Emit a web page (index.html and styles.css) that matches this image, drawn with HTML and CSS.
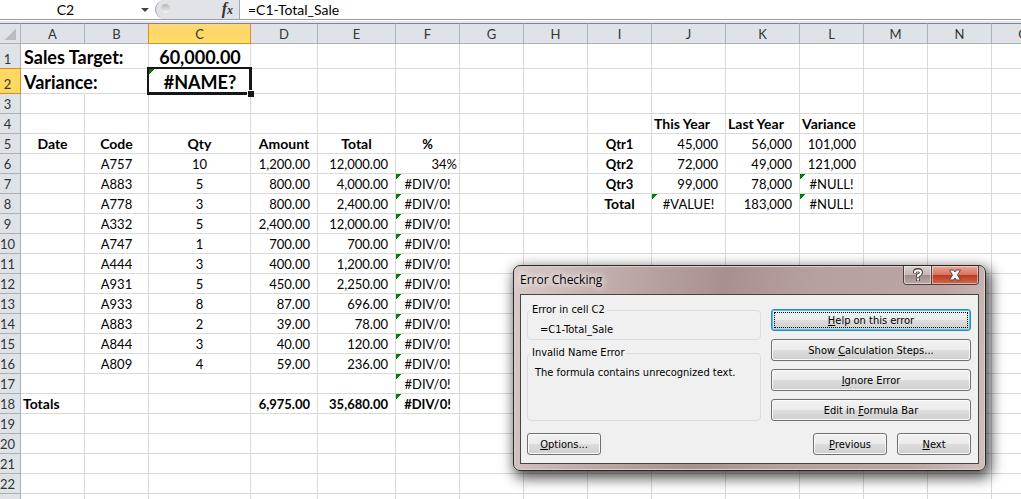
FILE: index.html
```
<!DOCTYPE html>
<html lang="en">
<head>
    <meta charset="UTF-8">
    <meta name="viewport" content="width=device-width, initial-scale=1.0">
    <title>Error Checking</title>
    <link rel="stylesheet" href="styles.css">
</head>
<body>
    <div class="app">
        <div class="formulaBar">
            <div class="nameBox">
                <input type="text" value="C2" aria-label="Name box">
                <button type="button" class="arrow" aria-label="Names"></button>
            </div>
            <div class="fxArea">
                <span class="knob"></span>
                <button type="button" class="fx" aria-label="Insert function">f<small>x</small></button>
            </div>
            <input type="text" class="formula" value="=C1-Total_Sale" aria-label="Formula">
        </div>
        <div class="sheet">
            <table id="grid"></table>
        </div>
    </div>

    <div class="dialog" role="dialog" aria-labelledby="dialogTitle">
        <div class="titleBar">
            <span class="title" id="dialogTitle">Error Checking</span>
            <div class="winButtons">
                <button type="button" class="help" aria-label="Help">
                    <svg width="12" height="14" viewBox="0 0 12 14">
                        <path d="M3 5.500V4Q3 2 6 2T9 4.500Q9 6 6 7.500V9.500M6 10.500V13" fill="none" stroke="#4e4546" stroke-width="4"/>
                        <path d="M3 5V4Q3 2.500 6 2.500T9 4.500Q9 6 6 7.500V9M6 10.500V12.500" fill="none" stroke="#fff" stroke-width="2"/>
                    </svg>
                </button>
                <button type="button" class="close" aria-label="Close">
                    <svg width="14" height="12" viewBox="0 0 14 12">
                        <path d="M1.500 1H5.500L7 3L8.500 1H12.500L9.500 6L12.500 11H8.500L7 9L5.500 11H1.500L4.500 6Z" fill="#f4f4f4" stroke="#5b4a52" stroke-width="1"/>
                    </svg>
                </button>
            </div>
        </div>
        <div class="client">
            <div class="main">
                <div class="groups">
                    <fieldset class="cellGroup">
                        <legend>Error in cell C2</legend>
                        <p>=C1-Total_Sale</p>
                    </fieldset>
                    <fieldset class="errorGroup">
                        <legend>Invalid Name Error</legend>
                        <p>The formula contains unrecognized text.</p>
                    </fieldset>
                </div>
                <div class="actions">
                    <button type="button" class="btn focused"><u>H</u>elp on this error</button>
                    <button type="button" class="btn">Show <u>C</u>alculation Steps...</button>
                    <button type="button" class="btn"><u>I</u>gnore Error</button>
                    <button type="button" class="btn">Edit in <u>F</u>ormula Bar</button>
                </div>
            </div>
            <div class="footer">
                <button type="button" class="btn options"><u>O</u>ptions...</button>
                <button type="button" class="btn"><u>P</u>revious</button>
                <button type="button" class="btn"><u>N</u>ext</button>
            </div>
        </div>
    </div>
    <script src="script.js"></script>
</body>
</html>
```
FILE: styles.css
```
*{
    box-sizing: border-box;
}

body{
    margin: 0;
    background: #fff;
    color: #000;
    font-family: Lato, "Liberation Sans", sans-serif;
    font-size: 13px;
}

button, input{
    font: inherit;
    color: inherit;
    margin: 0;
    padding: 0;
}

.app{
    display: flex;
    flex-direction: column;
    height: 100vh;
    overflow: hidden;
}

/* formula bar */
.formulaBar{
    display: flex;
    flex: none;
    height: 20px;
    border-bottom: 1px solid #9a9ba3;
    font-size: 14px;
}

.formulaBar input{
    border: none;
    outline: none;
    background: none;
    min-width: 0;
}

.nameBox{
    display: flex;
    width: 155px;
}

.nameBox input{
    flex: 1;
    padding-right: 4px;
    text-align: center;
}

.arrow{
    width: 20px;
    border: none;
    background: none;
    display: flex;
    align-items: center;
    justify-content: center;
}

.arrow::before{
    content: "";
    border: 4px solid transparent;
    border-top-color: #444;
    border-bottom: none;
}

.fxArea{
    display: flex;
    justify-content: space-between;
    width: 85px;
    padding: 0 6px 0 5px;
    background: #e0e3e8;
    border: 1px solid #a4a7ac;
    border-width: 0 1px;
    border-radius: 12px 0 0 12px;
}

.knob{
    width: 9px;
    height: 9px;
    margin-top: 4px;
    border-radius: 50%;
    background: linear-gradient(#b4b6ba, #f4f5f6);
}

.fx{
    border: none;
    background: none;
    font: italic bold 16px/18px "Liberation Serif", serif;
    color: #333;
}

.fx small{
    font-size: 12px;
}

.formula{
    flex: 1;
    padding-left: 8px;
}

/* grid */
.sheet{
    flex: 1;
    overflow: hidden;
    padding-top: 3px;
    background: linear-gradient(#fff 1px, #e4e4f2 1px, #e4e4f2 3px, #fff 3px);
}

table{
    table-layout: fixed;
    border-collapse: separate;
    border-spacing: 0;
    width: 1px;
}

th, td{
    height: 20px;
    padding: 0 2px;
    border: 1px solid #d9d9d9;
    border-width: 0 1px 1px 0;
    line-height: 18px;
    white-space: nowrap;
    vertical-align: bottom;
    text-align: left;
}

thead th{
    height: 21px;
    border-color: #aab1b8;
    border-top: 1px solid #80848c;
    background: #dfe3e8;
    color: #333;
    font-weight: normal;
    text-align: center;
}

thead .active{
    border-color: #80848c #d98d29 #d98d29;
    background: linear-gradient(#fbd978, #ffd764 50%, #ffdf6c);
}

thead .beforeActive{
    border-right-color: #d98d29;
}

tbody th{
    padding: 0 5px 0 0;
    border-color: #aab1b8;
    background: #dfe3e8;
    color: #333;
    font-weight: normal;
    text-align: center;
}

tbody .active{
    border-color: #d98d29;
    background: #ffd85f;
}

tbody .aboveActive{
    border-bottom-color: #d98d29;
}

.corner::before{
    content: "";
    display: block;
    width: 11px;
    height: 11px;
    margin: 0 0 3px 3px;
    background: linear-gradient(135deg, transparent 50%, #b9bcc2 50%);
}

.tall th, .tall td{
    height: 25px;
}

.tall td{
    padding-left: 3px;
    font-size: 18px;
    line-height: 22px;
}

.overflowing{
    border-right-color: transparent;
    overflow: visible;
}

.label{
    font-size: 14px;
}

.bold{
    font-weight: bold;
}

.center{
    text-align: center;
}

.num{
    padding-right: 7px;
    text-align: right;
}

.percent{
    padding-right: 2px;
    text-align: right;
}

.error{
    background: linear-gradient(135deg, #008000 4px, transparent 4px) no-repeat;
}

.selected{
    position: relative;
}

.selected::before{
    content: "";
    position: absolute;
    inset: -2px;
    border: 3px solid #15151c;
    border-width: 2px 3px 3px 2px;
}

.selected::after{
    content: "";
    position: absolute;
    right: -4px;
    bottom: -4px;
    width: 6px;
    height: 6px;
    border: 1px solid #fff;
    border-width: 1px 0 0 1px;
    background: #15151c;
}

/* dialog */
.dialog{
    position: absolute;
    left: 513px;
    top: 265px;
    width: 473px;
    padding: 0 6px 6px;
    border: 1px solid #2c2526;
    border-radius: 7px;
    background: linear-gradient(100deg, #d9cbc9, #c0acaa 20%, #a8908e 42%, #b7a19e 60%, #b9a5a2 85%, #cfc0be);
    box-shadow: inset 0 0 0 1px #dccfcd, 3px 5px 14px 2px rgba(0, 0, 0, 0.7);
    font-family: "DejaVu Sans Condensed", "DejaVu Sans", sans-serif;
    font-size: 11px;
}

.titleBar{
    display: flex;
    justify-content: space-between;
    height: 28px;
}

.title{
    font: 12px/28px "Open Sans", sans-serif;
    text-shadow: 0 0 6px #fff, 0 0 8px #fff;
}

.winButtons{
    display: flex;
    height: 19px;
    border: 1px solid #4e4042;
    border-top: none;
    border-radius: 0 0 4px 4px;
    overflow: hidden;
}

.winButtons button{
    display: flex;
    align-items: center;
    justify-content: center;
    border: none;
    box-shadow: inset 0 0 0 1px rgba(255, 255, 255, 0.45);
}

.help{
    width: 27px;
    background: linear-gradient(#ddd2d0, #c5b5b3 50%, #a18c8a 50%, #bba9a7);
}

.winButtons .close{
    width: 47px;
    border-left: 1px solid #4e4042;
    background: linear-gradient(#e9a898, #d9705c 50%, #b93a20 50%, #d06a4c);
}

.client{
    display: flex;
    flex-direction: column;
    gap: 12px;
    padding: 8px 7px 8px 6px;
    border: 1px solid #4a4142;
    background: #f0f0f0;
}

.main{
    display: grid;
    grid-template-columns: 1fr 200px;
    gap: 10px;
}

.groups{
    display: flex;
    flex-direction: column;
    gap: 6px;
}

fieldset{
    margin: 0;
    padding: 0 6px;
    border: 1px solid #d5dfe5;
    border-radius: 4px;
    min-width: 0;
}

legend{
    margin-left: -4px;
    padding: 0 2px;
    line-height: 14px;
}

fieldset p{
    margin: 6px 0 0;
    line-height: 14px;
}

.cellGroup{
    height: 37px;
}

.cellGroup p{
    padding-left: 6px;
}

.errorGroup{
    height: 75px;
}

.errorGroup p{
    padding-left: 1px;
}

.actions{
    display: flex;
    flex-direction: column;
    gap: 8px;
    padding-top: 6px;
}

.btn{
    width: 74px;
    height: 22px;
    border: 1px solid #707070;
    border-radius: 3px;
    background: linear-gradient(#f2f2f2, #ebebeb 50%, #dddddd 50%, #cfcfcf);
    box-shadow: inset 0 0 0 1px #fafafa;
}

.actions .btn{
    width: 100%;
}

.focused{
    border-color: #3c7fb1;
    box-shadow: inset 0 0 0 1px #48c8f5;
    outline: 1px dotted #000;
    outline-offset: -4px;
}

.footer{
    display: flex;
    gap: 10px;
}

.options{
    margin-right: auto;
}
```
FILE: script.js
```
var columns = "ABCDEFGHIJKLMNOPQRST".split("");
var widths = { C: 102, D: 67, E: 78, J: 74, K: 74 };
var rowCount = 40;

// cell -> [text, classes]
var cells = {
    A1: ["Sales Target:", "bold overflowing"],
    C1: ["60,000.00", "bold center"],
    A2: ["Variance:", "bold overflowing"],
    C2: ["#NAME?", "bold center error selected"],
    A5: ["Date", "bold label center"],
    B5: ["Code", "bold label center"],
    C5: ["Qty", "bold label center"],
    D5: ["Amount", "bold label center"],
    E5: ["Total", "bold label center"],
    F5: ["%", "bold center"],
    F6: ["34%", "percent"],
    F17: ["#DIV/0!", "center error"],
    A18: ["Totals", "bold label"],
    D18: ["6,975.00", "bold num"],
    E18: ["35,680.00", "bold num"],
    F18: ["#DIV/0!", "bold center error"],
    J4: ["This Year", "bold label"],
    K4: ["Last Year", "bold label"],
    L4: ["Variance", "bold label"],
    L7: ["#NULL!", "center error"],
    J8: ["#VALUE!", "center error"],
    K8: ["183,000", "num"],
    L8: ["#NULL!", "center error"],
    I8: ["Total", "bold label center"]
};

var orders = [
    ["A757", "10", "1,200.00", "12,000.00"],
    ["A883", "5", "800.00", "4,000.00"],
    ["A778", "3", "800.00", "2,400.00"],
    ["A332", "5", "2,400.00", "12,000.00"],
    ["A747", "1", "700.00", "700.00"],
    ["A444", "3", "400.00", "1,200.00"],
    ["A931", "5", "450.00", "2,250.00"],
    ["A933", "8", "87.00", "696.00"],
    ["A883", "2", "39.00", "78.00"],
    ["A844", "3", "40.00", "120.00"],
    ["A809", "4", "59.00", "236.00"]
];
orders.forEach(function(order, i){
    var row = i + 6;
    cells["B" + row] = [order[0], "center"];
    cells["C" + row] = [order[1], "center"];
    cells["D" + row] = [order[2], "num"];
    cells["E" + row] = [order[3], "num"];
    if(i > 0){
        cells["F" + row] = ["#DIV/0!", "center error"];
    }
});

var quarters = [
    ["Qtr1", "45,000", "56,000", "101,000"],
    ["Qtr2", "72,000", "49,000", "121,000"],
    ["Qtr3", "99,000", "78,000"]
];
quarters.forEach(function(quarter, i){
    var row = i + 5;
    cells["I" + row] = [quarter[0], "bold center"];
    cells["J" + row] = [quarter[1], "num"];
    cells["K" + row] = [quarter[2], "num"];
    if(quarter[3]){
        cells["L" + row] = [quarter[3], "num"];
    }
});

var html = "<colgroup><col style='width:21px'>";
columns.forEach(function(name){
    html += "<col style='width:" + (widths[name] || 64) + "px'>";
});
html += "</colgroup><thead><tr><th class='corner'></th>";
columns.forEach(function(name){
    var cls = name == "C" ? "active" : name == "B" ? "beforeActive" : "";
    html += "<th class='" + cls + "'>" + name + "</th>";
});
html += "</tr></thead><tbody>";
for(var r = 1; r <= rowCount; r++){
    html += "<tr class='" + (r < 3 ? "tall" : "") + "'>";
    html += "<th class='" + (r == 2 ? "active" : r == 1 ? "aboveActive" : "") + "'>" + r + "</th>";
    columns.forEach(function(name){
        var cell = cells[name + r] || ["", ""];
        html += "<td class='" + cell[1] + "'>" + cell[0] + "</td>";
    });
    html += "</tr>";
}
document.getElementById("grid").innerHTML = html + "</tbody>";
```
